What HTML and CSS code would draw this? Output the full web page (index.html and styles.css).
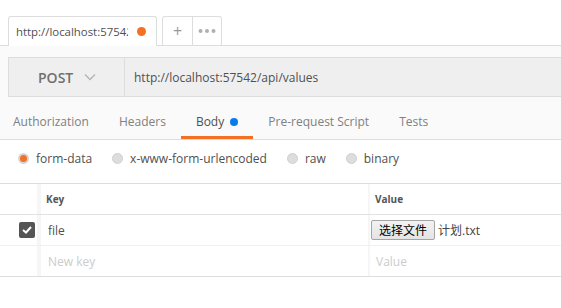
FILE: index.html
```html
<!DOCTYPE html>
<html lang="zh">
<head>
  <meta charset="UTF-8" />
  <title>Request Builder</title>
  <link rel="stylesheet" href="styles.css">
</head>
<body>
  <div class="tabbar">
    <div class="tab">
      <span class="tab-title">http://localhost:57542</span>
      <span class="tab-dot"></span>
    </div>
    <div class="tab-actions">
      <span class="tab-btn">+</span>
      <span class="tab-btn dots">
        <svg width="18" height="6" viewBox="0 0 18 6"><circle cx="2.5" cy="3" r="2" fill="#b0b0b0"/><circle cx="9" cy="3" r="2" fill="#b0b0b0"/><circle cx="15.5" cy="3" r="2" fill="#b0b0b0"/></svg>
      </span>
    </div>
  </div>

  <div class="builder">
    <div class="urlbar">
      <div class="method">
        <span>POST</span>
        <svg class="chevron" width="12" height="8" viewBox="0 0 12 8"><path d="M1 1.5 L6 6.5 L11 1.5" fill="none" stroke="#b5b5b5" stroke-width="1.4"/></svg>
      </div>
      <div class="url">http://localhost:57542/api/values</div>
    </div>

    <div class="req-tabs">
      <span class="req-tab">Authorization</span>
      <span class="req-tab">Headers</span>
      <span class="req-tab active">Body <i class="blue-dot"></i></span>
      <span class="req-tab">Pre-request Script</span>
      <span class="req-tab">Tests</span>
    </div>
  </div>

  <div class="body-types">
    <label class="opt"><span class="radio checked"></span>form-data</label>
    <label class="opt"><span class="radio"></span>x-www-form-urlencoded</label>
    <label class="opt"><span class="radio"></span>raw</label>
    <label class="opt"><span class="radio"></span>binary</label>
  </div>

  <div class="kv-table">
    <div class="kv-row head">
      <div class="c-check"></div>
      <div class="c-key">Key</div>
      <div class="c-val">Value</div>
    </div>
    <div class="kv-row">
      <div class="c-check">
        <span class="checkbox">
          <svg width="10" height="8" viewBox="0 0 10 8"><path d="M1 4 L4 6.5 L9 1" fill="none" stroke="#fff" stroke-width="2"/></svg>
        </span>
      </div>
      <div class="c-key">file</div>
      <div class="c-val">
        <span class="file-btn">选择文件</span>
        <span class="file-name">计划.txt</span>
      </div>
    </div>
    <div class="kv-row last">
      <div class="c-check"></div>
      <div class="c-key placeholder">New key</div>
      <div class="c-val placeholder">Value</div>
    </div>
  </div>
</body>
</html>
```

FILE: styles.css
```css
* {
  box-sizing: border-box;
}
body {
  margin: 0;
  width: 561px;
  overflow: hidden;
  font-family: 'Open Sans', 'Noto Sans CJK SC', sans-serif;
  font-size: 12px;
  color: #505050;
  background: #fff;
}
.tabbar {
  display: flex;
  align-items: flex-start;
  height: 46px;
  padding: 16px 0 0 8px;
  border-bottom: 1px solid #ddd;
}
.tab {
  display: flex;
  align-items: center;
  width: 149px;
  height: 30px;
  padding: 0 10px 0 7px;
  background: #fff;
  border: 1px solid #ddd;
  border-bottom: none;
  border-radius: 3px 3px 0 0;
  position: relative;
  z-index: 1;
}
.tab-title {
  width: 112px;
  overflow: hidden;
  white-space: nowrap;
  font-size: 11.4px;
  color: #505050;
}
.tab-dot {
  width: 9px;
  height: 9px;
  margin-left: 9px;
  border-radius: 50%;
  background: #f47023;
}
.tab-actions {
  display: flex;
  margin-left: 5px;
  height: 29px;
  border: 1px solid #ddd;
  border-bottom: none;
  border-radius: 3px 3px 0 0;
}
.tab-btn {
  width: 29px;
  display: flex;
  align-items: center;
  justify-content: center;
  color: #999;
  font-size: 16px;
}
.tab-btn.dots {
  border-left: 1px solid #ddd;
}
.builder {
  background: #fafafa;
  padding-top: 11px;
  border-bottom: 1px solid #ddd;
}
.urlbar {
  display: flex;
  height: 40px;
  margin-left: 8px;
  background: #efefef;
  border: 1px solid #ddd;
  border-right: none;
}
.method {
  display: flex;
  align-items: center;
  width: 116px;
  padding-left: 29px;
  border-right: 1px solid #ddd;
  font-size: 14px;
  font-weight: 600;
  color: #707070;
}
.chevron {
  margin-left: 11px;
}
.url {
  display: flex;
  align-items: center;
  padding-left: 9px;
  color: #505050;
}
.req-tabs {
  display: flex;
}
.req-tab {
  padding: 17px 15px 6px;
  line-height: 16px;
  color: #808080;
  border-bottom: 3px solid transparent;
}
.req-tab:first-child {
  padding-left: 13px;
}
.req-tab.active {
  color: #505050;
  border-bottom-color: #f47023;
}
.blue-dot {
  display: inline-block;
  width: 8px;
  height: 8px;
  margin-left: 3px;
  border-radius: 50%;
  background: #097bed;
}
.body-types {
  display: flex;
  align-items: center;
  height: 44px;
  padding: 0 0 7px 18px;
  border-bottom: 1px solid #ddd;
}
.opt {
  display: flex;
  align-items: center;
  margin-right: 20px;
  color: #505050;
}
.radio {
  width: 11px;
  height: 11px;
  margin-right: 7px;
  border-radius: 50%;
  background: #ddd;
  border: 1px solid #d0d0d0;
}
.radio.checked {
  background: #f47023;
  border: 2px solid #d6d6d6;
}
.kv-row {
  display: flex;
  height: 31px;
  border-bottom: 1px solid #f0f0f0;
}
.kv-row.head {
  border-bottom-color: #e2e2e2;
}
.kv-row.last {
  border-bottom-color: #ddd;
}
.c-check {
  width: 37px;
  display: flex;
  align-items: center;
  justify-content: flex-end;
  padding-right: 2px;
}
.c-key {
  width: 331px;
  display: flex;
  align-items: center;
  padding-left: 7px;
  border-left: 4px solid #f6f6f6;
}
.c-val {
  flex: 1;
  display: flex;
  align-items: center;
  padding-left: 1px;
  border-left: 2px solid #f6f6f6;
}
.head .c-key,
.head .c-val {
  font-size: 10px;
  font-weight: 700;
  color: #555;
}
.head .c-key {
  padding-left: 5px;
}
.head .c-val {
  padding-left: 5px;
}
.placeholder {
  color: #ccc;
}
.c-val.placeholder {
  padding-left: 6px;
}
.checkbox {
  width: 16px;
  height: 16px;
  border-radius: 2px;
  background: #555;
  display: flex;
  align-items: center;
  justify-content: center;
}
.file-btn {
  height: 20px;
  padding: 0 7px;
  line-height: 18px;
  font-size: 12px;
  font-family: 'Noto Sans CJK SC', sans-serif;
  color: #000;
  background: linear-gradient(#f2f2f2, #e4e4e4);
  border: 1px solid #a5a5a5;
  border-radius: 2px;
}
.file-name {
  margin-left: 3px;
  font-size: 12px;
  color: #444;
}
```
